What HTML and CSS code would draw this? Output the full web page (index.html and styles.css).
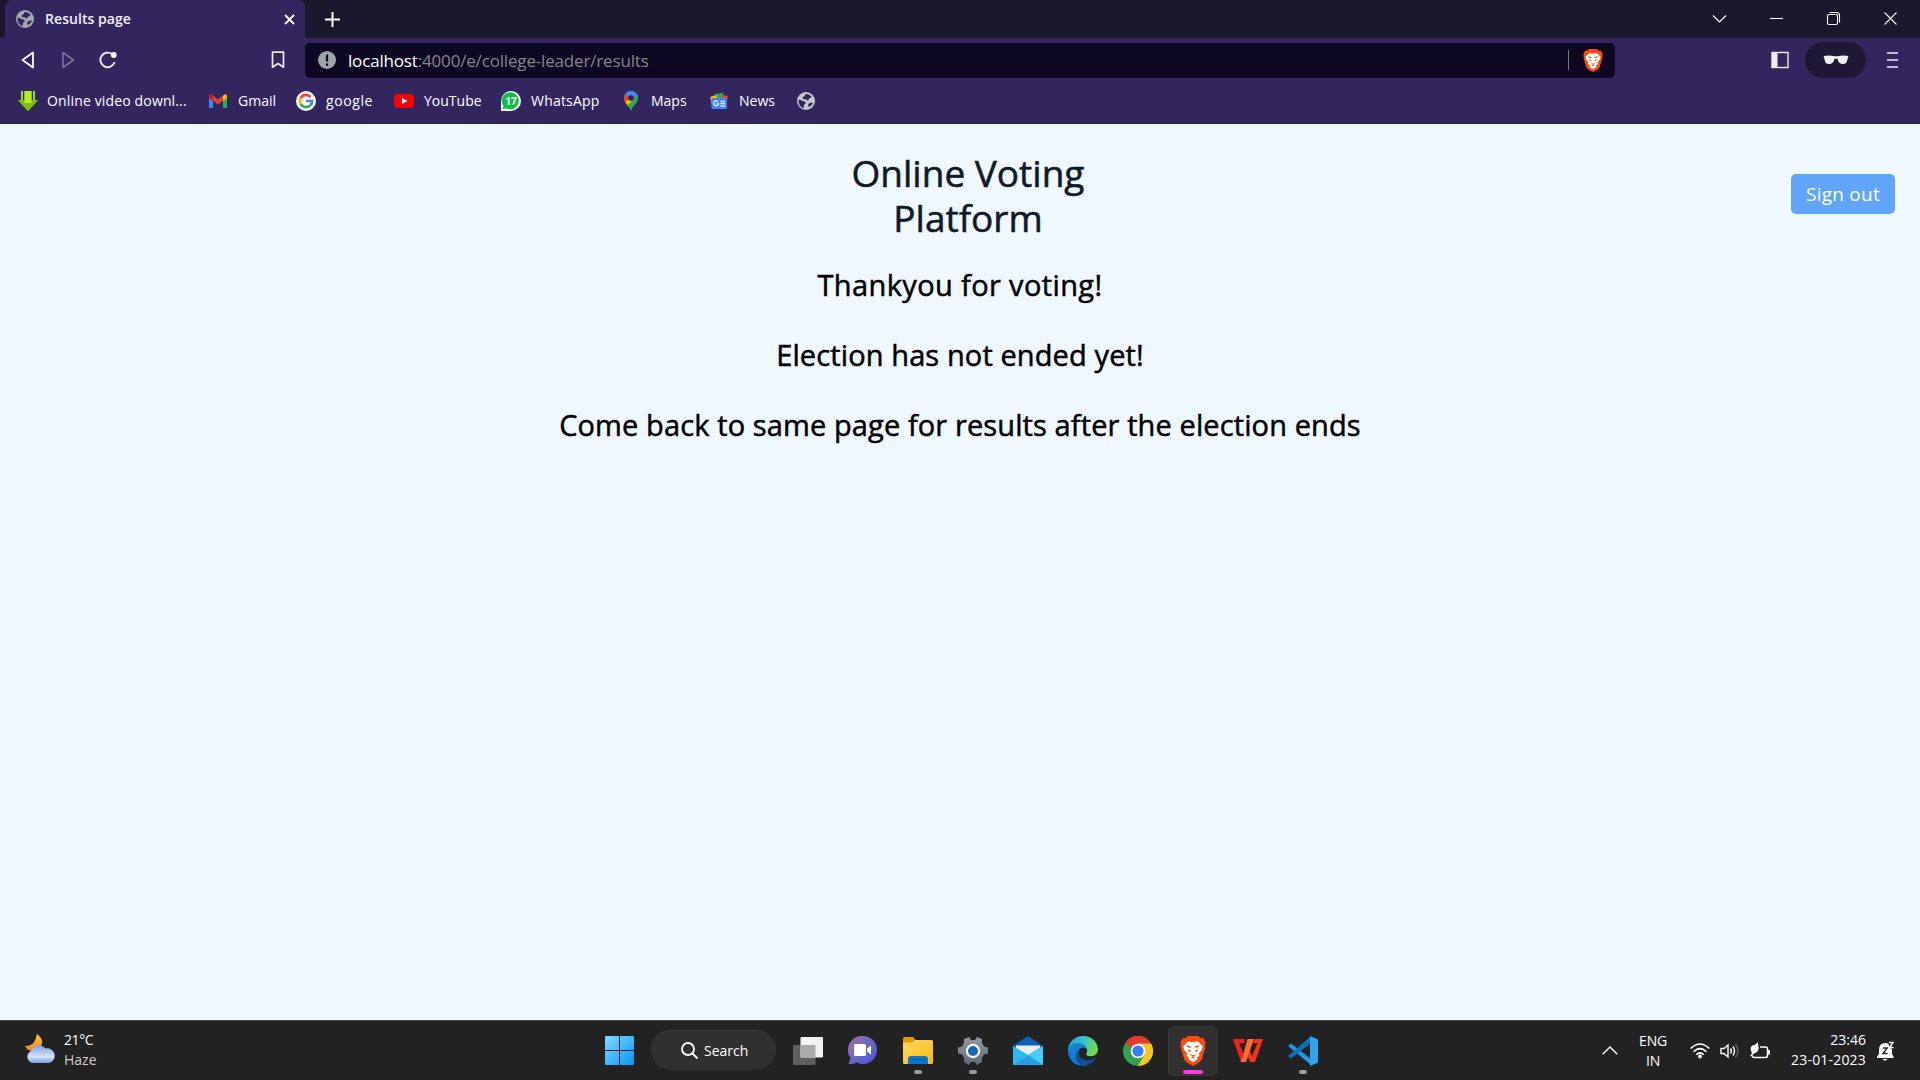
FILE: index.html
```html
<!DOCTYPE html>
<html lang="en">
<head>
<meta charset="utf-8">
<title>Results page</title>
<link rel="stylesheet" href="styles.css">
</head>
<body>
<svg class="defs" width="0" height="0">
  <defs>
    <symbol id="globe" viewBox="0 0 18 18"><circle cx="9" cy="9" r="9" fill="currentColor"/><path class="sea" d="M1.600 7.500Q4.500 8 6 9.300q2.700-.2 2.700 1.500 0 1.400-1.500 1.600-.6 1.600-.5 3.700C3.300 15.300 1.200 12 1.600 7.500zM8.500 2Q12 1.600 14.500 4.500q-.3 1.500-2.200 1.700-.3 2.300-2.300 2.300Q9.500 7 8 7.300 5.700 7.500 5.600 6q0-1.600 2-1.700zM11.200 12.200q.8-1.800 4.800-1.700-.8 3-4 4.600-1.200-1-.8-2.900z"/></symbol>
    <symbol id="brave" viewBox="0 0 24 28"><path d="M7 0h10l2 2.200 2.200-.3L24 6l-.8 2.300.5 1.700-3.700 12.500Q17 26 12 28q-5-2-8-5.500L.3 10l.5-1.700L0 6l2.800-4.100L5 2.200z" fill="#ff4b0a"/><path d="M7.500 5l4.500.9 4.500-.9 4.700 4.500-1 3.500-2.700 3 .6 2.500-2.600 1.700 1 1.300-4.500 3-4.500-3 1-1.300-2.600-1.700.6-2.500-2.700-3-1-3.500z" fill="#fff"/><path d="M6 8.700l4.500 1.100-.8 1.200-3-.6zM18 8.700l-4.500 1.100.8 1.200 3-.6zM6.700 12.500l3.300.8-.5 2zM17.300 12.500l-3.300.8.5 2zM9 16.800l3 1.200 3-1.200-2.400 2.500h-1.200zM9.500 20.300l2.500-.8 2.500.8-2.500.5z" fill="#ff4b0a"/></symbol>
  </defs>
</svg>

<header class="browser">
  <div class="tabstrip">
    <div class="tab">
      <svg class="tab-icon" width="18" height="18"><use href="#globe"/></svg>
      <span class="tab-title">Results page</span>
      <svg class="tab-close" width="11" height="11" viewBox="0 0 11 11"><path d="M1 1l9 9M10 1l-9 9" stroke="#fff" stroke-width="1.800"/></svg>
    </div>
    <svg class="newtab" width="15" height="15" viewBox="0 0 15 15"><path d="M7.500 0v15M0 7.500h15" stroke="#fff" stroke-width="2"/></svg>
    <div class="window-controls">
      <svg width="57" height="38" viewBox="0 0 57 38"><path d="M22 15.500l6.500 6.500 6.500-6.500"/></svg>
      <svg width="57" height="38" viewBox="0 0 57 38"><path d="M22 18.500h13"/></svg>
      <svg width="57" height="38" viewBox="0 0 57 38"><rect x="22.500" y="14.500" width="10" height="10" rx="1.500"/><path d="M24.500 12.500h7q3 0 3 3v7"/></svg>
      <svg width="58" height="38" viewBox="0 0 58 38"><path d="M22.500 12.500l12 12M34.500 12.500l-12 12"/></svg>
    </div>
  </div>

  <div class="toolbar">
    <div class="nav">
      <svg width="14" height="18" viewBox="0 0 14 18"><path d="M12 1.500v15L1.500 9z" fill="none" stroke="#fff" stroke-width="1.800" stroke-linejoin="round"/></svg>
      <svg class="off" width="14" height="18" viewBox="0 0 14 18"><path d="M2 1.500v15L12.500 9z" fill="none" stroke="#fff" stroke-width="1.600" stroke-linejoin="round"/></svg>
      <svg class="reload" width="18" height="18" viewBox="0 0 18 18"><path d="M15.600 11.300A7.300 7.300 0 1 1 13 3" fill="none" stroke="#eee" stroke-width="1.900"/><circle cx="14.800" cy="4" r="2.900" fill="#fff"/></svg>
      <svg class="bookmark" width="14" height="18" viewBox="0 0 14 18"><path d="M1.500 1.200h11v15L7 12.500l-5.500 3.700z" fill="none" stroke="#eee" stroke-width="1.700" stroke-linejoin="round"/></svg>
    </div>
    <div class="address">
      <svg width="18" height="18" viewBox="0 0 18 18"><circle cx="9" cy="9" r="9" fill="#9fa3ab"/><path d="M9 3.500v7M9 12.500v2.200" stroke="#0d0722" stroke-width="2.200"/></svg>
      <span class="url"><b>localhost</b>:4000/e/college-leader/results</span>
      <i class="bar"></i>
      <svg width="20" height="23" viewBox="0 0 24 28"><use href="#brave"/></svg>
    </div>
    <div class="tools">
      <svg width="18" height="18" viewBox="0 0 18 18"><rect x="1" y="1.500" width="16" height="15" fill="none" stroke="#eee" stroke-width="1.400"/><path d="M1 1.500h5.500v15H1z" fill="#eee"/></svg>
      <div class="private"><svg width="26" height="10" viewBox="0 0 26 10"><path d="M.5 1q6-1 11 .3h3q5-1.300 11-.3l-.8 2.200C24 8 22.500 9 19.500 9c-3 0-4.300-2-5-5.200h-3C10.800 7 9.500 9 6.500 9s-4.500-1-5.200-5.800z" fill="#f0f0f0"/></svg></div>
      <svg class="menu" width="11" height="18" viewBox="0 0 11 18"><path d="M0 2h11M0 9h11M0 16h11" stroke="#eee" stroke-width="1.700"/></svg>
    </div>
  </div>

  <nav class="bookmarks">
    <a class="downloader"><svg width="20" height="20" viewBox="0 0 20 20"><path d="M3 0h2v9H3zM15 0h2v9h-2zM6.500 0h7v9H20l-10 11L0 9h6.500z" fill="#9ade10"/><path d="M0 9h20L10 20z" fill="#7cc20a"/><path d="M6.500 0h7v12h-7z" fill="#b4ee20"/></svg><span>Online video downl...</span></a>
    <a><svg width="20" height="20" viewBox="0 0 20 20"><path d="M1 5.500l4 3V17H2.200Q1 17 1 16z" fill="#4285f4"/><path d="M19 5.500l-4 3V17h2.800Q19 17 19 16z" fill="#34a853"/><path d="M5 4.500l5 4 5-4v5l-5 4-5-4z" fill="#ea4335"/><path d="M15 4.500q4-3 4 .7V7l-4 3z" fill="#fbbc04"/><path d="M5 4.500q-4-3-4 .7V7l4 3z" fill="#c5221f"/></svg><span>Gmail</span></a>
    <a class="google"><svg width="20" height="20" viewBox="0 0 20 20"><circle cx="10" cy="10" r="10" fill="#fff"/><g fill="none" stroke-width="2.700"><path d="M14.600 6A6.100 6.100 0 0 0 4.700 7" stroke="#ea4335"/><path d="M4.700 7a6.100 6.100 0 0 0 0 6" stroke="#fbbc05"/><path d="M4.700 13a6.100 6.100 0 0 0 9.300 1.600" stroke="#34a853"/><path d="M14 14.600q2.200-1.800 2.100-4.600H10" stroke="#4285f4"/></g></svg><span>google</span></a>
    <a><svg width="20" height="20" viewBox="0 0 20 20"><rect y="3" width="20" height="14" rx="3.500" fill="#f00"/><path d="M8 7l5.500 3L8 13z" fill="#fff"/></svg><span>YouTube</span></a>
    <a class="whatsapp"><svg width="20" height="20" viewBox="0 0 20 20"><path d="M0 20V10a10 10 0 1 1 10 10z" fill="#fff"/><path d="M1.500 18.500l1-3.500A8.500 8.500 0 1 1 5 17.200z" fill="#0fbf45"/><text x="10" y="14" text-anchor="middle" class="count">17</text></svg><span>WhatsApp</span></a>
    <a><svg width="20" height="20" viewBox="0 0 20 20"><path d="M10 20C9.500 14.500 3 13 3 7a7 7 0 0 1 14 0c0 6-6.500 7.500-7 13z" fill="#34a853"/><path d="M4 10.500l8-8.500 5 4-9 9.500Q5 13 4 10.500z" fill="#fbbc04"/><path d="M4.700 2.500L10 7l-6 4Q1.500 6 4.700 2.500z" fill="#ea4335"/><path d="M4.700 2.500Q8-1 12.500.500q4 2 4.300 5L12 9.500 7.500 5.500z" fill="#4285f4"/><path d="M17 7q-.3-2-1-3.200L8 13l-1.500 1.500Q9.500 17 10 20 10.500 16 14 13q3-3 3-6z" fill="#34a853"/><circle cx="10" cy="7" r="2.800" fill="#33265f"/></svg><span>Maps</span></a>
    <a><svg width="20" height="20" viewBox="0 0 20 20"><path d="M6 3l8-1 1 6H6z" fill="#34a853"/><path d="M1 6l6-2 3 8-7 2z" fill="#fbbc04"/><path d="M19 5l-6-1-2 8 6 2z" fill="#ea4335"/><rect x="2.500" y="7" width="15.500" height="11" rx="1" fill="#4285f4"/><path d="M9 10.800a2.400 2.400 0 1 0 .5 2H7.500M11.500 10.500h4.500M11.500 12.700h4.500M11.500 15h4.500" stroke="#dfeaff" stroke-width="1.300" fill="none"/></svg><span>News</span></a>
    <a class="globe"><svg width="18" height="18"><use href="#globe"/></svg></a>
  </nav>
</header>

<main class="page">
  <div class="masthead">
    <h1>Online Voting Platform</h1>
    <button class="signout">Sign out</button>
  </div>
  <div class="messages">
    <p class="thanks">Thankyou for voting!</p>
    <p>Election has not ended yet!</p>
    <p>Come back to same page for results after the election ends</p>
  </div>
</main>

<footer class="taskbar">
  <div class="weather">
    <svg width="30" height="30" viewBox="0 0 30 30"><defs><linearGradient id="cl" x2="0" y2="1"><stop stop-color="#7da5e8"/><stop offset=".65" stop-color="#d3e1f8"/><stop offset="1" stop-color="#7c9de0"/></linearGradient><linearGradient id="mo" x2="0" y2="1"><stop stop-color="#f7c840"/><stop offset="1" stop-color="#ee8126"/></linearGradient></defs><path d="M12 0q10 8 1 15Q4 20 0 12q10 1 12-12z" fill="url(#mo)"/><path d="M7 29a6.500 6.500 0 0 1-1-12 8.500 8.500 0 0 1 14.500-2.500A7.300 7.300 0 0 1 24 29z" fill="url(#cl)"/></svg>
    <div><span class="temp">21°C</span><br><span class="dim">Haze</span></div>
  </div>
  <div class="apps">
    <div class="app"><svg width="29" height="29" viewBox="0 0 29 29"><defs><linearGradient id="wn" gradientUnits="userSpaceOnUse" x1="0" y1="0" x2="29" y2="29"><stop stop-color="#7fdcff"/><stop offset="1" stop-color="#0795f8"/></linearGradient></defs><path d="M1 0h13v14H0V1q0-1 1-1zM15 0h13q1 0 1 1v13H15zM0 15h14v14H1q-1 0-1-1zM15 15h14v13q0 1-1 1H15z" fill="url(#wn)"/></svg></div>
    <div class="search"><svg width="17" height="17" viewBox="0 0 17 17"><circle cx="7" cy="7" r="6" fill="none" stroke="#fff" stroke-width="1.800"/><path d="M11.200 11.200l5.300 5.300" stroke="#fff" stroke-width="2"/></svg><span>Search</span></div>
    <div class="app"><svg width="30" height="28" viewBox="0 0 30 28"><rect y="8" width="22.500" height="20" rx="1" fill="#5f5f5f"/><rect x="7.500" width="22.500" height="20.500" rx="1" fill="#f3f3f3"/><path d="M7.500 8h15v12.500h-15z" fill="#aaa"/></svg></div>
    <div class="app"><svg width="29" height="29" viewBox="0 0 29 29"><defs><linearGradient id="ch" x2="1" y2="1"><stop stop-color="#a76d9e"/><stop offset=".5" stop-color="#6868c8"/><stop offset="1" stop-color="#5050cf"/></linearGradient></defs><path d="M15 0a14 14 0 0 1 0 28q-4 0-6-1.500-4 2-8.500 1.500l2-6A14 14 0 0 1 15 0z" fill="url(#ch)"/><rect x="6" y="8" width="12" height="12" rx="1.500" fill="#fff"/><path d="M19 12.500l4-3v9l-4-3z" fill="#fff"/></svg></div>
    <div class="app"><svg width="30" height="27" viewBox="0 0 30 27"><defs><linearGradient id="fo" x2="1" y2="1"><stop stop-color="#ffd866"/><stop offset="1" stop-color="#fdb913"/></linearGradient></defs><path d="M0 1.500Q0 0 1.500 0H10l3 3.500-3 4H0z" fill="#e09d00"/><path d="M0 5.500h9.500L12 3h16.500Q30 3 30 4.500v21q0 1.500-1.500 1.500h-27Q0 27 0 25.500z" fill="url(#fo)"/><path d="M5 27v-5q0-3 3-3h14q3 0 3 3v5z" fill="#0a78c8"/><path d="M8 22.500h14" stroke="#064c8c"/></svg><i class="run"></i></div>
    <div class="app"><svg width="30" height="30" viewBox="0 0 30 30"><defs><linearGradient id="ge" x2="0" y2="1"><stop stop-color="#9097a0"/><stop offset="1" stop-color="#616a75"/></linearGradient></defs><path d="M11 1l2 3h4l2-3 5 2v4l2 3.500 4 1v6l-4 1-2 3.500v4l-5 3-2-3h-4l-2 3-5-3v-4l-2-3.500-4-1v-6l4-1L6 7V3z" fill="url(#ge)"/><circle cx="15" cy="15" r="7.200" fill="#fff"/><circle cx="15" cy="15" r="5" fill="#1269ba"/></svg><i class="run"></i></div>
    <div class="app"><svg width="30" height="29" viewBox="0 0 30 29"><path d="M15 0l15 10v7H0v-7z" fill="#0c62b4"/><path d="M3 9.500h24V20H3z" fill="#ededed"/><path d="M0 10l15 9L30 10v19H0z" fill="#2bb9ef"/><path d="M15 19L30 10v19z" fill="#48cdf8"/><path d="M15 19l15 10H0z" fill="#2a9de8"/></svg></div>
    <div class="app"><svg width="30" height="30" viewBox="0 0 30 30"><defs><linearGradient id="e1" x2="1" y2=".3"><stop stop-color="#1f9be2"/><stop offset=".6" stop-color="#39c9c8"/><stop offset="1" stop-color="#6fdc4b"/></linearGradient><linearGradient id="e2" x2="0" y2="1"><stop stop-color="#1484cf"/><stop offset="1" stop-color="#0a79dc"/></linearGradient></defs><path d="M0 14C1-4 28-5 30 13c0 5-4 8-9 7-4-1-3-2-2-4 1-3-2-6-5-6z" fill="url(#e1)"/><path d="M0 14Q2 6 11 7q7 1 7.500 5-7-2-8 4Q10 25 19 29 4 32 0 17z" fill="url(#e2)"/><path d="M10.500 14q-1 8 7 10 5 1 11-3-4 8-12 9Q6 27 8 18q.5-3 2.500-4z" fill="#124d96"/></svg></div>
    <div class="app"><svg width="30" height="30" viewBox="0 0 30 30"><circle cx="15" cy="15" r="15" fill="#34a04f"/><path d="M15 15L2 7.500A15 15 0 0 1 28 7.500z" fill="#e23b2e"/><path d="M15 7.500h13A15 15 0 0 1 15 30l6.500-11z" fill="#fdc520"/><path d="M2 7.500L8.500 18.500 15 15z" fill="#34a04f"/><circle cx="15" cy="15" r="7.300" fill="#fff"/><circle cx="15" cy="15" r="5.600" fill="#3b7ded"/></svg></div>
    <div class="app active"><div class="window"><svg width="26" height="30" viewBox="0 0 24 28"><use href="#brave"/></svg></div><i class="run"></i></div>
    <div class="app"><svg width="30" height="23" viewBox="0 0 30 23"><path d="M0 0h11.500v4H6l5 12 2 7H8z" fill="#f3201c"/><path d="M22 0h8l-8 23h-5l-3.500-9 2-5.500 3.500 8.500L24.500 4H20z" fill="#f5341c"/><path d="M14.500 0H21l-8 23H8z" fill="#ff6a35"/></svg></div>
    <div class="app"><svg width="30" height="30" viewBox="0 0 30 30"><path d="M0 10l3-2.500L23 23v6z" fill="#2497dd"/><path d="M0 20l3 2.500L23 7V0z" fill="#0b71b8"/><path d="M22 0l8 3.500v23L22 30V0z" fill="#2ba6f0"/></svg><i class="run"></i></div>
  </div>
  <div class="tray">
    <svg class="up" width="16" height="9" viewBox="0 0 16 9"><path d="M.7 8.300L8 1l7.300 7.300" fill="none" stroke="#fff" stroke-width="1.400"/></svg>
    <div class="lang">ENG<br>IN</div>
    <svg class="wifi" width="20" height="16" viewBox="0 0 20 16"><g fill="none" stroke="#fff" stroke-width="1.500"><path d="M.6 5.500q9.400-9 18.800 0M3.500 8.700q6.500-6.200 13 0M6.300 11.600q3.700-3.500 7.400 0"/></g><circle cx="10" cy="13.500" r="1.900" fill="#fff"/></svg>
    <svg class="vol" width="20" height="16" viewBox="0 0 20 16"><g fill="none" stroke="#fff" stroke-width="1.400"><path d="M1 5.500h3L8 2v12L4 10.500H1z"/><path d="M10.500 5.500q1.700 2.500 0 5M13 3.500q3 4.500 0 9"/><path d="M15.500 1.500q5 6.500 0 13" stroke="#666"/></g></svg>
    <svg class="bat" width="20" height="18" viewBox="0 0 20 18"><path d="M10 5h5.500Q17.500 5 17.500 7v6.500q0 2-2 2h-11q-2 0-2.500-2" fill="none" stroke="#fff" stroke-width="1.500"/><path d="M18 8h2v4.500h-2z" fill="#fff"/><path d="M7.500 0Q11 10 4 11.500l-3 3-.7-1 1.700-2.500Q-1.500 4 4 3q2.500-.5 3.500-3z" fill="#fff"/></svg>
    <div class="clock">23:46<br><span>23-01-2023</span></div>
    <svg class="bell" width="18" height="20" viewBox="0 0 18 20"><path d="M2 9q0-7 6.500-7Q15 2 15 9v4l1.500 2.500V17H0v-1.500L2 13z" fill="#fff"/><path d="M5.500 18h5q-2.500 3-5 0z" fill="#fff"/><path d="M6 7h4.200L6 12.500h4.500" stroke="#222" stroke-width="1.400" fill="none"/><path d="M10.500 0H18v7.500h-5z" fill="#222"/><path d="M12 1.500h4L12.500 6.500h4" stroke="#fff" stroke-width="1.400" fill="none"/></svg>
  </div>
</footer>
</body>
</html>
```
FILE: styles.css
```css
* { box-sizing: border-box; }
body {
  margin: 0; width: 1920px; height: 1080px; overflow: hidden;
  display: flex; flex-direction: column;
  background: #f0f8ff; color: #fff;
  font: 14px/20px "Open Sans", "Noto Sans", sans-serif;
}
svg { display: block; flex: none; }
span { white-space: nowrap; }
.defs { position: absolute; }
.sea { fill: #33265f; }

/* Browser chrome */
.browser { height: 124px; background: #33265f; border-bottom: 1px solid #2a1f50; }
.tabstrip { height: 38px; display: flex; align-items: center; background: #1b182e; padding-left: 5px; }
.tab { width: 300px; height: 38px; display: flex; align-items: center; background: #33265f; border-radius: 7px 7px 0 0; padding: 0 10px 0 11px; }
.tab-icon { color: #a3a6af; }
.tab-title { margin-left: 11px; font-weight: 600; letter-spacing: .06px; color: #f1eff6; }
.tab-close { margin-left: auto; }
.newtab { margin-left: 20px; }
.window-controls { margin-left: auto; display: flex; }
.window-controls path, .window-controls rect { fill: none; stroke: #fff; stroke-width: 1.1; }

.toolbar { height: 44px; display: flex; align-items: center; }
.nav { width: 305px; display: flex; align-items: center; padding: 0 20px 0 21px; }
.nav svg + svg { margin-left: 26px; }
.nav svg.reload { margin-left: 24px; }
.nav svg.bookmark { margin-left: auto; }
.off { opacity: .35; }
.address { width: 1310px; height: 35px; display: flex; align-items: center; background: #0d0722; border-radius: 5px; padding: 0 12px 0 13px; }
.url { margin-left: 12px; padding-top: 1px; font-size: 17px; letter-spacing: -.17px; color: #85838f; }
.url b { font-weight: 400; color: #fff; }
.bar { width: 1px; height: 20px; margin-left: auto; margin-right: 14px; background: #77737f; }
.tools { flex: 1; display: flex; align-items: center; padding-left: 156px; }
.private { width: 61px; height: 36px; margin-left: 16px; border-radius: 18px; background: #1e1834; display: flex; align-items: center; justify-content: center; }
.menu { margin-left: 21px; }

.bookmarks { height: 38px; padding-left: 18px; display: grid; grid-template-columns: 190px 88px 98px 107px 120px 88px 88px 30px; }
.bookmarks a { display: flex; align-items: center; gap: 10px; }
.bookmarks .downloader { gap: 9px; letter-spacing: .15px; }
.bookmarks .google { letter-spacing: .6px; }
.bookmarks .whatsapp { letter-spacing: .2px; }
.globe { color: #c5c5cb; }
.count { font: 700 10px "Open Sans", sans-serif; letter-spacing: 0; fill: #fff; }

/* Results page */
.page { height: 896px; color: #000; padding-top: 26px; }
.masthead { display: flex; justify-content: flex-end; align-items: flex-start; padding-right: 25px; }
h1 { width: 320px; margin: 0 663px 0 0; padding: 0 30px; text-align: center; font-size: 37px; line-height: 45px; font-weight: 500; letter-spacing: 0; color: #111827; -webkit-text-stroke: .55px #111827; }
.signout { width: 104px; height: 40px; margin-top: 24px; border: 0; border-radius: 5px; padding: 1px 0 0; background: #60a5fa; color: #fff; font: 19px/39px "Open Sans", sans-serif; letter-spacing: .25px; }
.messages { text-align: center; font-size: 29px; font-weight: 500; line-height: 40px; letter-spacing: .11px; -webkit-text-stroke: .5px #000; }
.messages p { margin: 0 0 30px; }
.messages .thanks { margin-top: 25px; letter-spacing: .37px; }

/* Taskbar */
.taskbar { height: 60px; display: flex; background: #222; border-top: 1px solid #454745; line-height: 20px; }
.weather { width: 592px; display: flex; align-items: flex-start; gap: 9px; padding: 13px 0 0 25px; }
.weather div { margin-top: -4px; }
.temp { letter-spacing: -.4px; }
.dim { color: #ccc; }
.apps { display: flex; }
.app { width: 55px; height: 59px; position: relative; display: flex; align-items: center; justify-content: center; }
.search { width: 125px; height: 40px; margin: 9px 4px; border-radius: 20px; background: #303030; border-top: 1px solid #3e3e3e; display: flex; align-items: center; padding-left: 30px; gap: 6px; }
.window { width: 50px; height: 50px; padding-left: 11px; border-radius: 6px; background: #303030; border: 1px solid #383838; border-right: 6px double #333; display: flex; align-items: center; }
.run { position: absolute; bottom: 6px; left: 24px; width: 8px; height: 4px; border-radius: 2px; background: #9a9a9a; }
.active .run { left: 18px; width: 20px; background: #ff3be8; }
.tray { flex: 1; display: flex; align-items: center; padding-left: 272px; }
.lang { width: 28px; margin: 0 23px 0 21px; text-align: center; letter-spacing: -.15px; }
.vol, .bat { margin-left: 10px; }
.clock { width: 96px; margin: 0 11px 2px 0; text-align: right; }
.clock span { letter-spacing: .19px; }
```
